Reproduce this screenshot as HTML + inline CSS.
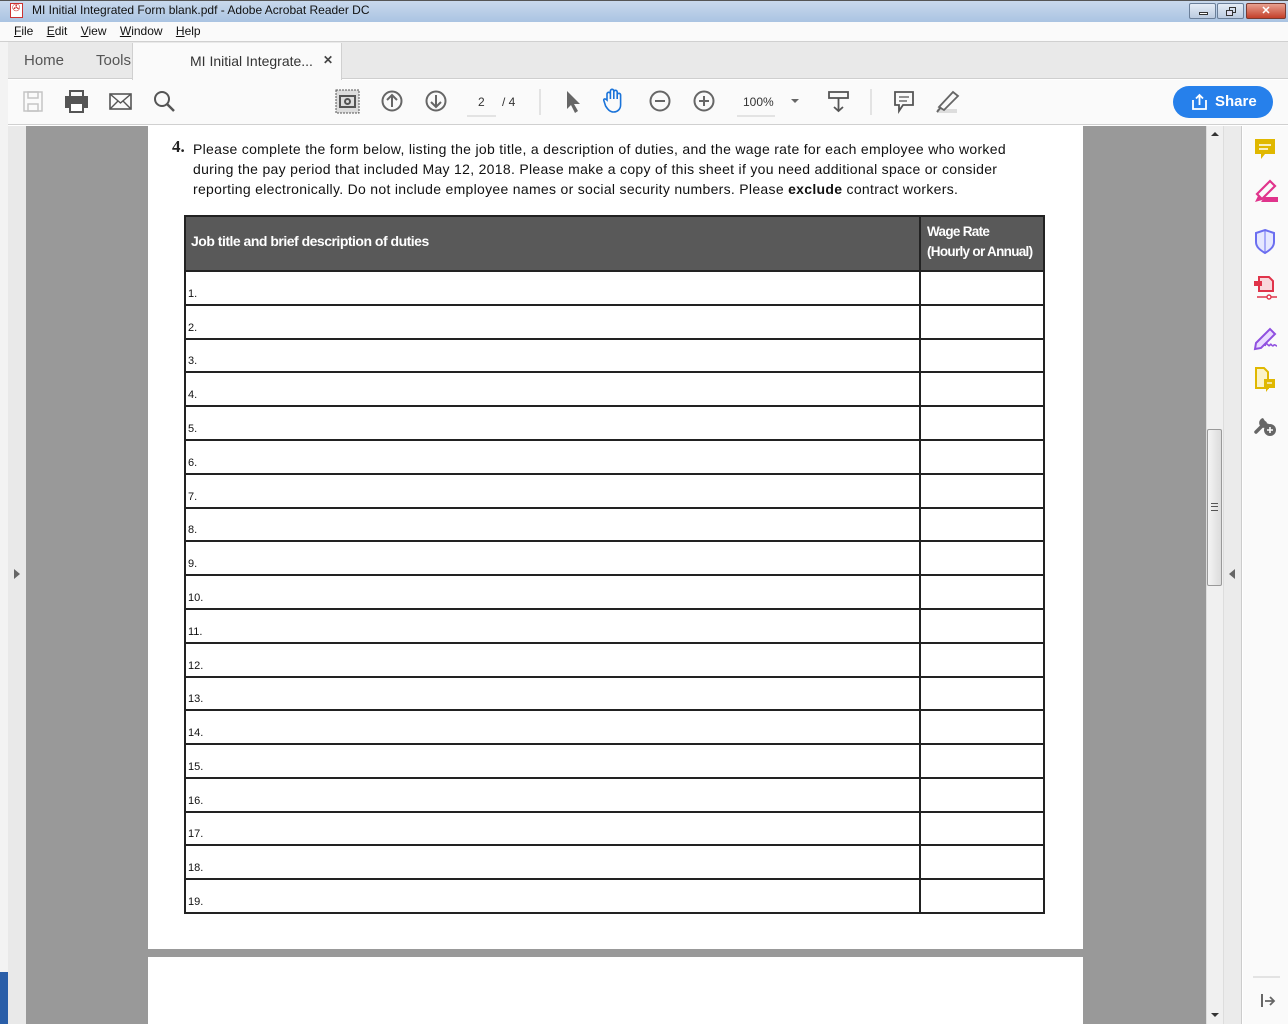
<!DOCTYPE html>
<html><head><meta charset="utf-8"><style>
*{margin:0;padding:0;box-sizing:border-box}
body{width:1288px;height:1024px;overflow:hidden;position:relative;font-family:"Liberation Sans",sans-serif;background:#fff}
.a{position:absolute}
u{text-decoration:underline}
</style></head><body>
<div class="a" style="left:0;top:0;width:1288px;height:22px;background:linear-gradient(#c9d9ec,#aac4e2);border-top:1px solid #555"></div>
<div class="a" style="left:10px;top:3px;width:13px;height:15px;background:#fff;border:1px solid #c33"></div>
<div class="a" style="left:12px;top:3px;color:#c22;font-size:10px">✇</div>
<div class="a" style="left:32px;top:3px;font-size:12px;color:#111">MI Initial Integrated Form blank.pdf - Adobe Acrobat Reader DC</div>
<div class="a" style="left:1189px;top:3px;width:27px;height:16px;border:1px solid #6b7f99;border-radius:2px;background:linear-gradient(#e4ecf6,#bccbe0)"><div class="a" style="left:9px;top:8px;width:9px;height:3px;border:1px solid #333;background:#fff"></div></div>
<div class="a" style="left:1217px;top:3px;width:27px;height:16px;border:1px solid #6b7f99;border-radius:2px;background:linear-gradient(#e4ecf6,#bccbe0)"><div class="a" style="left:11px;top:3px;width:7px;height:6px;border:1px solid #333"></div><div class="a" style="left:8px;top:6px;width:7px;height:6px;border:1px solid #333;background:#dde"></div></div>
<div class="a" style="left:1246px;top:3px;width:40px;height:16px;border:1px solid #7a3a30;border-radius:2px;background:linear-gradient(#e8a090,#c4402a);color:#fff;font-size:11px;font-weight:bold;text-align:center;line-height:14px">✕</div>
<div class="a" style="left:0;top:22px;width:1288px;height:20px;background:#fafafa;border-bottom:1px solid #d0d0d0"></div>
<div class="a" style="left:14px;top:24px;font-size:12px;color:#111"><u>F</u>ile&nbsp;&nbsp;&nbsp;&nbsp;<u>E</u>dit&nbsp;&nbsp;&nbsp;&nbsp;<u>V</u>iew&nbsp;&nbsp;&nbsp;&nbsp;<u>W</u>indow&nbsp;&nbsp;&nbsp;&nbsp;<u>H</u>elp</div>
<div class="a" style="left:0;top:42px;width:1288px;height:37px;background:#e9e9e9;border-bottom:1px solid #cfcfcf"></div>
<div class="a" style="left:0;top:42px;width:8px;height:982px;background:#f3f3f3"></div>
<div class="a" style="left:24px;top:52px;font-size:15px;color:#555">Home</div>
<div class="a" style="left:96px;top:52px;font-size:15px;color:#555">Tools</div>
<div class="a" style="left:132px;top:43px;width:210px;height:37px;background:#fafafa;border-left:1px solid #d0d0d0;border-right:1px solid #d0d0d0"></div>
<div class="a" style="left:190px;top:53px;font-size:14px;color:#333">MI Initial Integrate...</div>
<div class="a" style="left:323px;top:53px;font-size:12px;color:#444;font-weight:bold">✕</div>
<div class="a" style="left:8px;top:80px;width:1280px;height:45px;background:#fafafa;border-bottom:1px solid #d0d0d0"></div>
<svg class="a" style="left:0;top:80px" width="1288" height="45">
<g fill="none" stroke-width="2">
<rect x="24" y="12" width="18" height="19" stroke="#c4c4c4" stroke-width="1.5"/><rect x="28" y="12" width="10" height="6" stroke="#c4c4c4" stroke-width="1.5"/><rect x="28" y="24" width="10" height="7" stroke="#c4c4c4" stroke-width="1.5"/>
<rect x="66" y="17" width="21" height="10" fill="#555" stroke="#555"/><rect x="70" y="11" width="13" height="6" stroke="#555"/><rect x="70" y="23" width="13" height="9" fill="#fff" stroke="#555"/>
<rect x="110" y="14" width="21" height="15" stroke="#555" stroke-width="1.6"/><path d="M110 14 L120.5 23 L131 14 M110 29 L118 21 M131 29 L123 21" stroke="#555" stroke-width="1.4"/>
<circle cx="162" cy="19" r="7" stroke="#555"/><path d="M167 24 L174 31" stroke="#555" stroke-width="2.5"/>
<rect x="336" y="10" width="23" height="23" fill="#ddd" stroke="#555" stroke-width="1" stroke-dasharray="2 1"/><rect x="340" y="16" width="15" height="11" stroke="#555"/><circle cx="347.5" cy="21.5" r="2.5" stroke="#555"/>
<circle cx="392" cy="21" r="9.5" stroke="#666"/><path d="M392 27 V15 M387 20 L392 15 L397 20" stroke="#666"/>
<circle cx="436" cy="21" r="9.5" stroke="#666"/><path d="M436 15 V27 M431 22 L436 27 L441 22" stroke="#666"/>
<path d="M467 36 H496" stroke="#ccc" stroke-width="1"/>
<path d="M540 9 V35" stroke="#ccc" stroke-width="1"/>
<path d="M567 11 L567 29 L571 25 L575 33 L578 31 L574 24 L580 24 Z" fill="#666" stroke="none"/>
<path d="M607 20 V14 a1.7 1.7 0 0 1 3.4 0 V19 V11 a1.7 1.7 0 0 1 3.4 0 V19 V12 a1.7 1.7 0 0 1 3.4 0 V19 V15 a1.7 1.7 0 0 1 3.4 0 V25 c0 4 -3 7 -7 7 c-4 0 -6 -3 -8 -6 L604 21 c-1 -2 1 -3 3 -1 Z" stroke="#1a73d9" stroke-width="1.6"/>
<circle cx="660" cy="21" r="9.5" stroke="#666"/><path d="M655 21 H665" stroke="#666"/>
<circle cx="704" cy="21" r="9.5" stroke="#666"/><path d="M699 21 H709 M704 16 V26" stroke="#666"/>
<path d="M737 36 H775" stroke="#ccc" stroke-width="1"/>
<path d="M791 19 L799 19 L795 23 Z" fill="#666" stroke="none"/>
<rect x="829" y="12" width="19" height="6" stroke="#555" stroke-width="1.8"/><path d="M838.5 18 V31 M834 27 L838.5 31 L843 27" stroke="#555" stroke-width="1.8"/>
<path d="M871 9 V35" stroke="#ccc" stroke-width="1"/>
<path d="M895 12 H913 V25 H903 L899 31 V25 H895 Z" stroke="#555" stroke-width="1.8"/><path d="M899 17 H909 M899 21 H907" stroke="#555" stroke-width="1.3"/>
<rect x="937" y="29" width="20" height="4" fill="#ddd" stroke="none"/>
<path d="M939 27 L953 12 L958 16 L944 30 Z" stroke="#666" stroke-width="1.8"/><path d="M937 32 L941 27" stroke="#666"/>
</g>
<text x="478" y="26" font-size="12" fill="#333">2</text>
<text x="502" y="26" font-size="12" fill="#333">/ 4</text>
<text x="743" y="26" font-size="12" fill="#333">100%</text>
</svg>
<div class="a" style="left:1173px;top:86px;width:100px;height:32px;border-radius:16px;background:#2680eb"></div>
<svg class="a" style="left:1190px;top:92px" width="20" height="20"><path d="M3 8 V17 H16 V8 M9.5 13 V3 M6 6.5 L9.5 3 L13 6.5" fill="none" stroke="#fff" stroke-width="1.8"/></svg>
<div class="a" style="left:1215px;top:93px;font-size:15px;font-weight:bold;color:#fff">Share</div>
<div class="a" style="left:8px;top:126px;width:18px;height:898px;background:#e9e9e9"></div>
<div class="a" style="left:0;top:972px;width:8px;height:52px;background:#2a5ea8"></div>
<div class="a" style="left:14px;top:569px;width:0;height:0;border-top:5px solid transparent;border-bottom:5px solid transparent;border-left:6px solid #666"></div>
<div class="a" style="left:26px;top:126px;width:1180px;height:898px;background:#999"></div>
<div class="a" style="left:148px;top:126px;width:935px;height:823px;background:#fff"></div>
<div class="a" style="left:148px;top:957px;width:935px;height:67px;background:#fff"></div>
<div class="a" style="left:172px;top:137px;font-family:'Liberation Serif',serif;font-weight:bold;font-size:17px;color:#222">4.</div>
<div class="a" style="left:193px;top:139px;width:880px;font-size:14px;line-height:20px;color:#111;letter-spacing:0.3px;white-space:nowrap">Please complete the form below, listing the job title, a description of duties, and the wage rate for each employee who worked<br>during the pay period that included May 12, 2018. Please make a copy of this sheet if you need additional space or consider<br>reporting electronically. Do not include employee names or social security numbers. Please <b>exclude</b> contract workers.</div>
<div class="a" style="left:184px;top:215px;width:861px;height:56px;background:#595959"></div>
<div class="a" style="left:191px;top:233px;font-size:14px;font-weight:bold;color:#fff;letter-spacing:-0.5px">Job title and brief description of duties</div>
<div class="a" style="left:927px;top:222px;font-size:13.5px;font-weight:bold;color:#fff;line-height:20px;letter-spacing:-0.7px">Wage Rate<br>(Hourly or Annual)</div>
<div class="a" style="left:184px;top:215px;width:861px;height:699px;border:2px solid #222"></div>
<div class="a" style="left:919px;top:215px;width:2px;height:699px;background:#222"></div>
<div id="rows"></div>
<script>
var ys=[271,305,339,372,406,440,474,508,541,575,609,643,677,710,744,778,812,845,879,913];var h='';
for(var i=0;i<ys.length;i++){h+='<div class="a" style="left:184px;top:'+(ys[i]-1)+'px;width:861px;height:2px;background:#222"></div>';
if(i<19)h+='<div class="a" style="left:188px;top:'+(ys[i+1]-17)+'px;font-size:11px;color:#111">'+(i+1)+'.</div>';}
document.getElementById('rows').innerHTML=h;
</script>
<div class="a" style="left:1206px;top:126px;width:17px;height:898px;background:#f0f0f0;border-left:1px solid #ddd"></div>
<div class="a" style="left:1211px;top:132px;border-left:4px solid transparent;border-right:4px solid transparent;border-bottom:4px solid #333"></div>
<div class="a" style="left:1211px;top:1013px;border-left:4px solid transparent;border-right:4px solid transparent;border-top:4px solid #333"></div>
<div class="a" style="left:1207px;top:429px;width:15px;height:157px;border:1px solid #999;border-radius:2px;background:linear-gradient(90deg,#f4f4f4,#dcdcdc)"></div>
<div class="a" style="left:1211px;top:503px;width:7px;height:8px;border-top:1px solid #555;border-bottom:1px solid #555"><div style="margin-top:2px;height:1px;background:#555"></div></div>
<div class="a" style="left:1223px;top:126px;width:19px;height:898px;background:#ebebeb;border-left:1px solid #ddd;border-right:1px solid #ccc"></div>
<div class="a" style="left:1229px;top:569px;border-top:5px solid transparent;border-bottom:5px solid transparent;border-right:6px solid #666"></div>
<div class="a" style="left:1243px;top:126px;width:45px;height:898px;background:#fafafa"></div>
<svg class="a" style="left:1243px;top:126px" width="45" height="898">
<path d="M12 13 H32 V28 H22 L18 33 V28 H12 Z" fill="#e0b800"/><path d="M16 19 H28 M16 23 H25" stroke="#fff" stroke-width="1.6"/>
<path d="M14 68 L27 55 L32 60 L19 73 Z" fill="none" stroke="#e0348c" stroke-width="2.2"/><path d="M12 76 L15 70 L19 74 Z M22 71 H35 V76 H18 Z" fill="#e0348c"/>
<path d="M22 104 L31 107 V116 C31 121 27 124 22 127 C17 124 13 121 13 116 V107 Z" fill="#e6e8ff" stroke="#6b6ef0" stroke-width="2"/><path d="M22 105 V126" stroke="#6b6ef0" stroke-width="1"/>
<path d="M16 151 H26 L30 155 V165 H16 Z" fill="#f8d8dc" stroke="#e0344a" stroke-width="2"/><rect x="11" y="155" width="8" height="5" fill="#e0344a"/><path d="M14 171 H34" stroke="#e0344a" stroke-width="1.5"/><circle cx="26" cy="171" r="2" fill="#fff" stroke="#e0344a" stroke-width="1.4"/>
<path d="M13 217 L27 203 L32 208 L18 222 L12 223 Z" fill="#eadcff" stroke="#9050e0" stroke-width="2"/><path d="M22 220 c2 -6 3 2 5 -1 c1 -3 2 3 4 0 c1 -1 2 1 3 1" fill="none" stroke="#9050e0" stroke-width="1.6"/>
<path d="M13 242 H21 L25 246 V262 H13 Z" fill="#fbf3c8" stroke="#e0b800" stroke-width="2"/><path d="M21 253 H32 V262 H26 L23 266 V262 H21 Z" fill="#e0b800"/><path d="M24 257 H29" stroke="#fff" stroke-width="1.2"/>
<path d="M13 306 L22 297" stroke="#666" stroke-width="3.5" stroke-linecap="round"/><path d="M20 292 a5 5 0 1 0 6 6 l-3 -1 l-1 -2 z" fill="#666"/><circle cx="27" cy="304" r="6" fill="#666"/><path d="M24 304 H30 M27 301 V307" stroke="#fff" stroke-width="1.6"/>
<path d="M10 851 H37" stroke="#ccc" stroke-width="1"/>
<path d="M19 868 V881" stroke="#666" stroke-width="2"/><path d="M22 875 H30 M27 871 L31 875 L27 879" fill="none" stroke="#666" stroke-width="1.8"/>
</svg>
</body></html>
